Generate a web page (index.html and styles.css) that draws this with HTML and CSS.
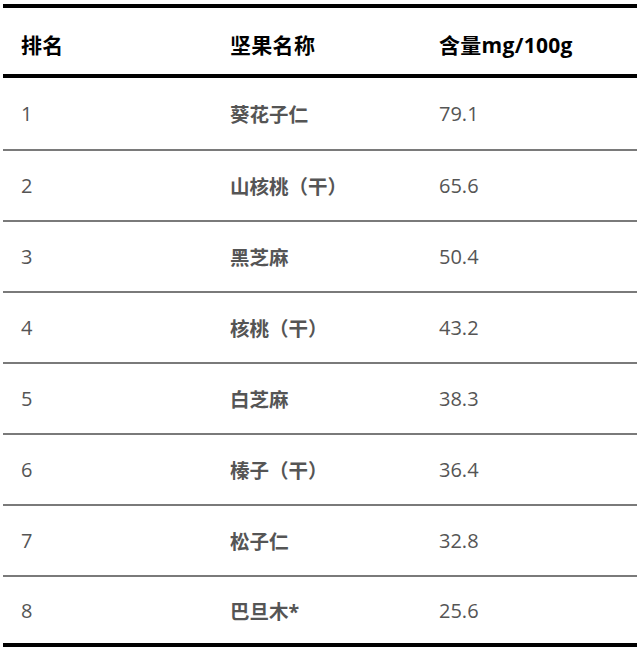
FILE: index.html
```html
<!DOCTYPE html>
<html lang="zh">
<head>
<meta charset="utf-8">
<link rel="stylesheet" href="styles.css">
</head>
<body>
<div class="table">
  <div class="row head">
    <div class="cell">排名</div>
    <div class="cell">坚果名称</div>
    <div class="cell">含量mg/100g</div>
  </div>
  <div class="row"><div class="cell num">1</div><div class="cell name">葵花子仁</div><div class="cell num">79.1</div></div>
  <div class="row"><div class="cell num">2</div><div class="cell name">山核桃（干）</div><div class="cell num">65.6</div></div>
  <div class="row"><div class="cell num">3</div><div class="cell name">黑芝麻</div><div class="cell num">50.4</div></div>
  <div class="row"><div class="cell num">4</div><div class="cell name">核桃（干）</div><div class="cell num">43.2</div></div>
  <div class="row"><div class="cell num">5</div><div class="cell name">白芝麻</div><div class="cell num">38.3</div></div>
  <div class="row"><div class="cell num">6</div><div class="cell name">榛子（干）</div><div class="cell num">36.4</div></div>
  <div class="row"><div class="cell num">7</div><div class="cell name">松子仁</div><div class="cell num">32.8</div></div>
  <div class="row last"><div class="cell num">8</div><div class="cell name">巴旦木*</div><div class="cell num">25.6</div></div>
</div>
</body>
</html>
```
FILE: styles.css
```css
html, body {
  margin: 0;
  padding: 0;
  background: #fff;
}
body {
  font-family: "Open Sans", "Noto Sans CJK SC", sans-serif;
}
.table {
  margin: 4px 3px 0 3px;
  width: 634px;
  border-top: 4px solid #000;
  border-bottom: 4px solid #000;
}
.row {
  display: grid;
  grid-template-columns: 209px 209px 1fr;
  align-items: center;
  height: 71px;
  box-sizing: border-box;
  border-bottom: 2px solid #7a7a7a;
}
.row.head {
  height: 70px;
  border-bottom: 4px solid #000;
  padding-top: 6px;
}
.row.last {
  height: 66px;
  border-bottom: none;
}
.row:nth-child(2) {
  height: 73px;
}
.cell {
  padding-left: 18px;
}
.head .cell {
  font-size: 21px;
  font-weight: 700;
  color: #000;
  letter-spacing: 0.3px;
}
.num {
  font-size: 20px;
  color: #555;
}
.name {
  font-size: 19.5px;
  font-weight: 700;
  color: #555;
}
```
